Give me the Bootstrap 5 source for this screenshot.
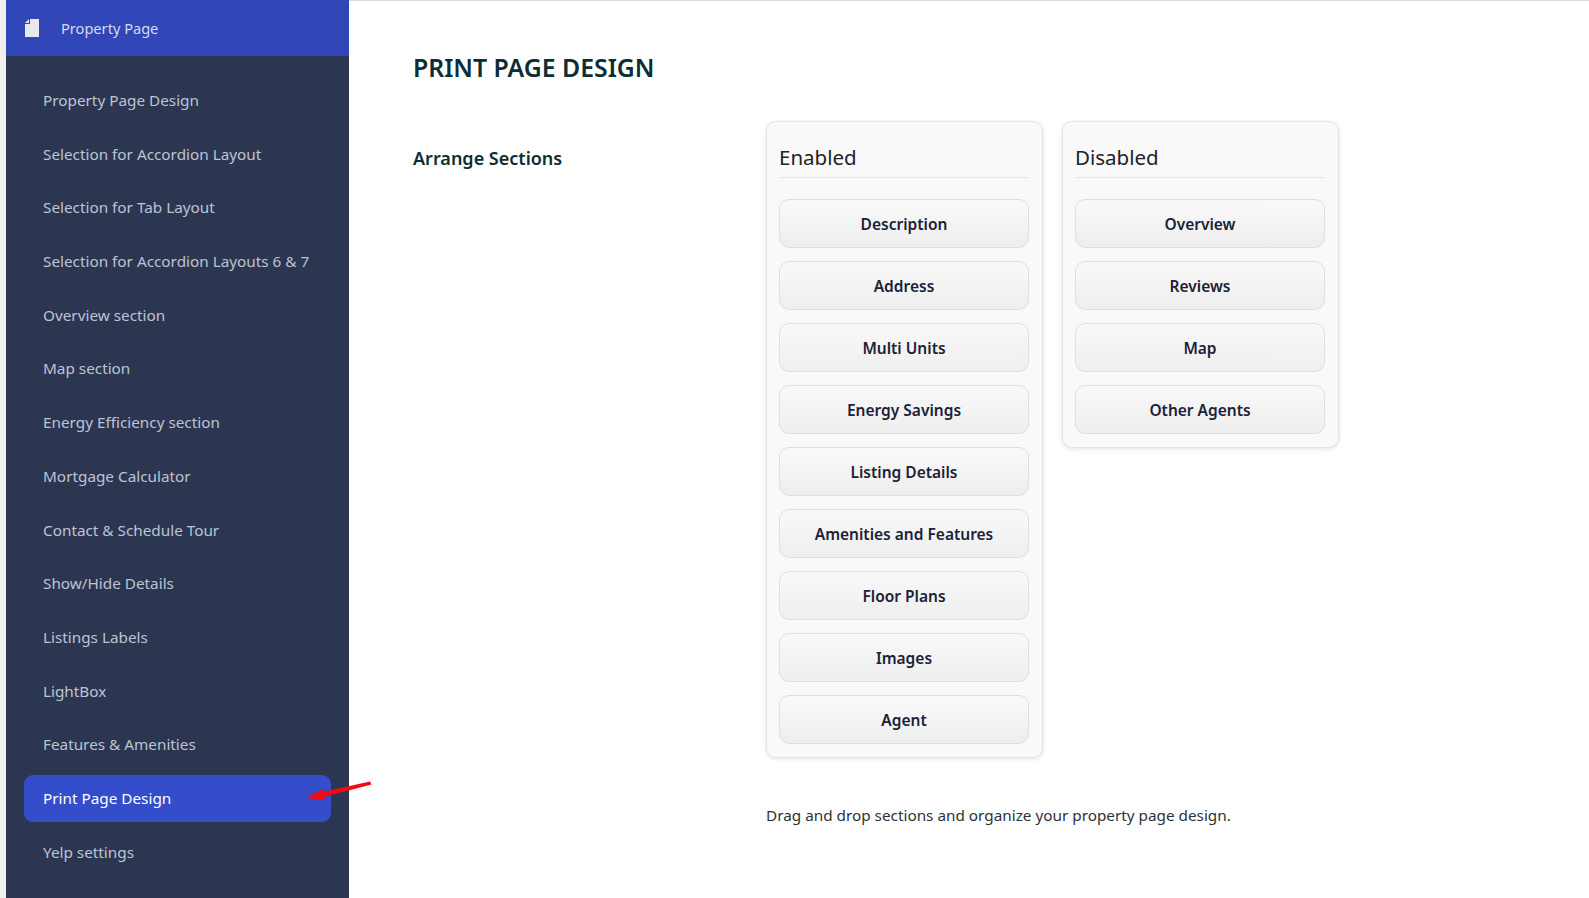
<!DOCTYPE html>
<html lang="en">

<head>
    <meta charset="UTF-8">
    <meta name="viewport" content="width=device-width, initial-scale=1.0">
    <title>Print Page Design</title>
    <link href="https://cdn.jsdelivr.net/npm/bootstrap@5.3.3/dist/css/bootstrap.min.css" rel="stylesheet">
    <style>
        html, body {
            height: 100%;
        }

        body {
            font-family: "Noto Sans", "Open Sans", sans-serif;
            color: #1d2327;
            background: #fff;
            overflow: hidden;
        }

        .page-wrap {
            height: 898px;
            padding-left: 6px;
            background: #f0f0f0;
        }

        .side-panel {
            width: 343px;
            flex: none;
            background: #2d3651;
        }

        .side-head {
            height: 56px;
            padding-left: 19px;
            gap: 22px;
            background: #3247b7;
            color: #d5daf0;
            font-size: 14.6px;
        }

        .side-head span {
            padding-top: 2px;
        }

        .side-list {
            padding: 21px 18px 0;
            gap: 6.7px;
        }

        .side-link {
            height: 47px;
            padding-left: 19px;
            border-radius: 9px;
            color: #bcc4d4;
            font-size: 15.3px;
            text-decoration: none;
        }

        .side-link.current {
            background: #344dca;
            color: #fff;
        }

        .main-panel {
            background: #fff;
            border-top: 1px solid #dcdcde;
            padding: 49px 0 0 64px;
        }

        .page-title {
            font-size: 24.8px;
            font-weight: 600;
            color: #0a2e33;
            margin-bottom: 0;
            line-height: 35px;
        }

        .section-label {
            width: 353px;
            flex: none;
            padding-top: 37px;
            font-size: 18px;
            font-weight: 600;
            line-height: 25px;
            color: #0a2e33;
        }

        .sort-box {
            width: 277px;
            padding: 21px 13px 13px 12px;
            background: #f9f9f9;
            border: 1px solid #e2e4e9;
            border-radius: 10px;
            box-shadow: 0 1px 4px rgba(0, 0, 0, .12);
        }

        .sort-title {
            font-size: 20.5px;
            line-height: 28px;
            padding-bottom: 6px;
            margin-bottom: 21px;
            border-bottom: 1px solid #e6e6e9;
            color: #1d2327;
        }

        .sort-item {
            height: 49px;
            padding-top: 3px;
            margin-bottom: 13px;
            border: 1px solid #dedfe3;
            border-radius: 10px;
            background: linear-gradient(#f9f9f9, #eeeeee);
            font-size: 15.5px;
            font-weight: 600;
            color: #1b2136;
        }

        .sort-item:last-child {
            margin-bottom: 0;
        }

        .sort-row {
            gap: 19px;
            margin-top: 12px;
        }

        .help-text {
            margin: 46px 0 0 353px;
            font-size: 15.3px;
            color: #2c3338;
        }

        .arrow-mark {
            position: absolute;
            left: 305px;
            top: 780px;
        }
    </style>
</head>

<body>
    <div class="page-wrap d-flex position-relative">
        <div class="side-panel">
            <div class="side-head d-flex align-items-center">
                <svg width="14" height="18" viewBox="0 0 14 18">
                    <path fill="#e8e8ec" d="M5 0h9v18H0V5h5zM0 4l4-4v4z" />
                </svg>
                <span>Property Page</span>
            </div>
            <div class="side-list d-flex flex-column" id="sideList"></div>
        </div>
        <div class="main-panel flex-grow-1">
            <h1 class="page-title">PRINT PAGE DESIGN</h1>
            <div class="d-flex mt-4">
                <div class="section-label">Arrange Sections</div>
                <div class="sort-row d-flex align-items-start">
                    <div class="sort-box">
                        <div class="sort-title">Enabled</div>
                        <div id="enabledList"></div>
                    </div>
                    <div class="sort-box">
                        <div class="sort-title">Disabled</div>
                        <div id="disabledList"></div>
                    </div>
                </div>
            </div>
            <p class="help-text">Drag and drop sections and organize your property page design.</p>
        </div>
        <svg class="arrow-mark" width="68" height="24" viewBox="0 0 68 24">
            <path fill="#f00a14" d="M1 18 18 9 19.5 11.5 65 1.5 66.5 4.5 20.5 16.5 20.5 20z" />
        </svg>
    </div>

    <script src="https://cdn.jsdelivr.net/npm/bootstrap@5.3.3/dist/js/bootstrap.bundle.min.js"></script>

    <script>
        const sideLinks = ['Property Page Design', 'Selection for Accordion Layout', 'Selection for Tab Layout',
            'Selection for Accordion Layouts 6 & 7', 'Overview section', 'Map section', 'Energy Efficiency section',
            'Mortgage Calculator', 'Contact & Schedule Tour', 'Show/Hide Details', 'Listings Labels', 'LightBox',
            'Features & Amenities', 'Print Page Design', 'Yelp settings'];
        const enabled = ['Description', 'Address', 'Multi Units', 'Energy Savings', 'Listing Details',
            'Amenities and Features', 'Floor Plans', 'Images', 'Agent'];
        const disabled = ['Overview', 'Reviews', 'Map', 'Other Agents'];

        function fillItems(id, items) {
            document.getElementById(id).innerHTML = items.map(item =>
                `<div class="sort-item d-flex align-items-center justify-content-center">${item.replace('&', '&amp;')}</div>`
            ).join('');
        }

        document.getElementById('sideList').innerHTML = sideLinks.map(link => {
            const current = link === 'Print Page Design' ? ' current' : '';
            return `<a href="#" class="side-link d-flex align-items-center${current}">${link.replace('&', '&amp;')}</a>`;
        }).join('');
        fillItems('enabledList', enabled);
        fillItems('disabledList', disabled);
    </script>
</body>

</html>
